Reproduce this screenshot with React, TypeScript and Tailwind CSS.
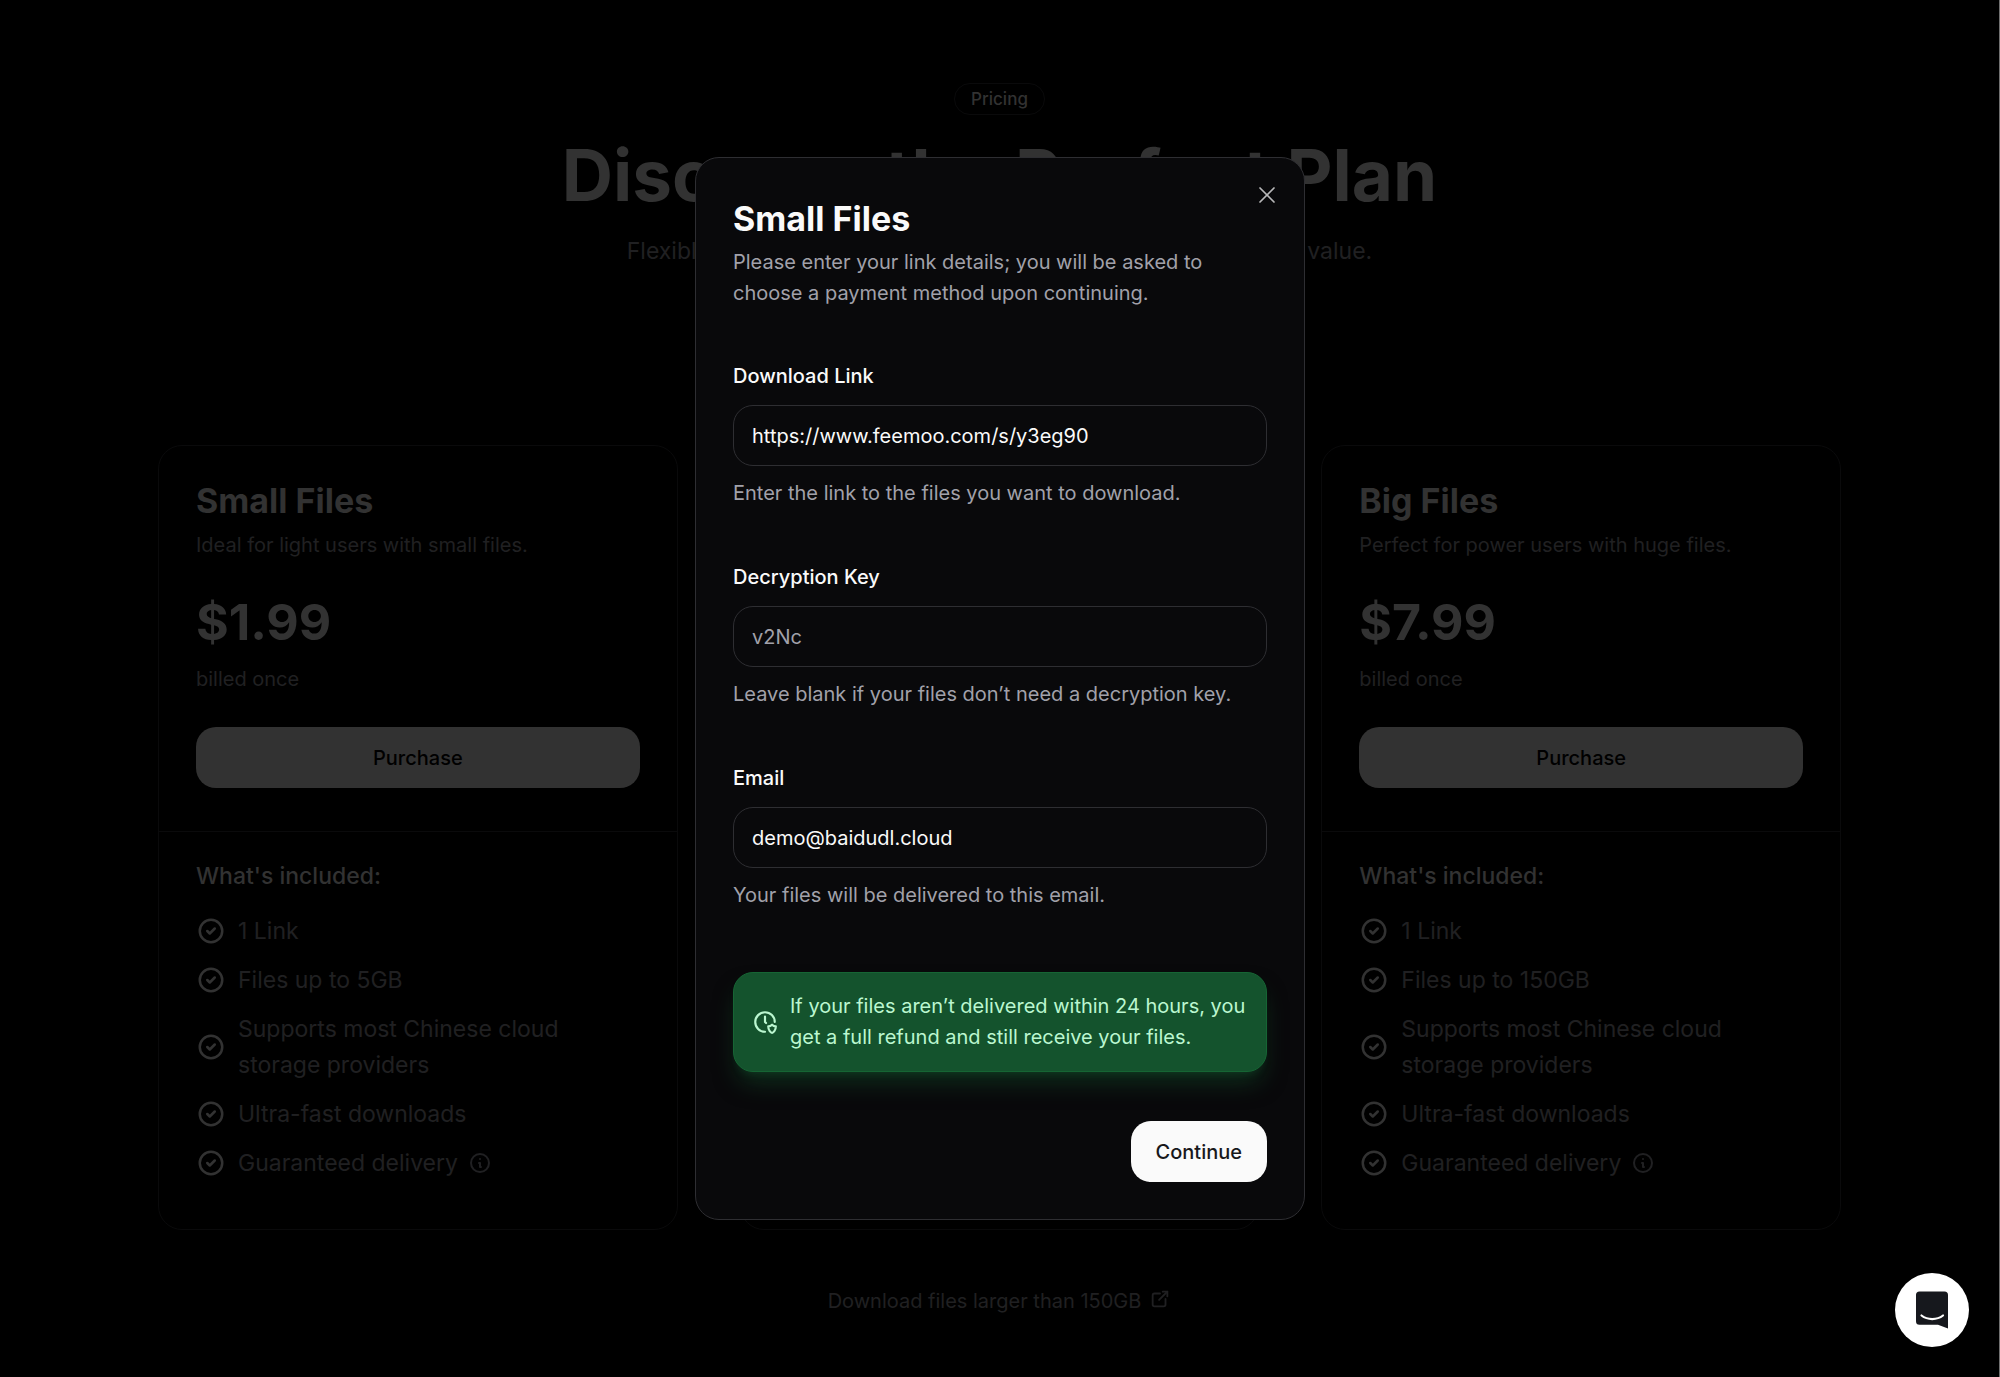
import { useState, type ReactNode } from 'react'
import { X } from 'lucide-react'

interface Plan {
  name: string
  tagline: string
  price: string
  features: string[]
}

const smallPlan: Plan = {
  name: 'Small Files',
  tagline: 'Ideal for light users with small files.',
  price: '$1.99',
  features: ['1 Link', 'Files up to 5GB', 'Supports most Chinese cloud storage providers', 'Ultra-fast downloads'],
}

const bigPlan: Plan = {
  name: 'Big Files',
  tagline: 'Perfect for power users with huge files.',
  price: '$7.99',
  features: ['1 Link', 'Files up to 150GB', 'Supports most Chinese cloud storage providers', 'Ultra-fast downloads'],
}

function Icon({ className, children }: { className: string; children: ReactNode }) {
  return (
    <svg className={className} viewBox="0 0 24 24" fill="none" stroke="currentColor" strokeWidth={2} strokeLinecap="round" strokeLinejoin="round" aria-hidden="true">
      {children}
    </svg>
  )
}

function CheckItem({ children }: { children: ReactNode }) {
  return (
    <li className="flex items-center gap-3">
      <Icon className="w-[30px] h-[30px] shrink-0 text-[#323232]">
        <path d="M3 12a9 9 0 1 0 18 0a9 9 0 1 0 -18 0" />
        <path d="M9 12l2 2l4 -4" />
      </Icon>
      {children}
    </li>
  )
}

function PlanCard({ plan }: { plan: Plan }) {
  return (
    <div className="flex-1 border border-[#0a0a0b] rounded-3xl">
      <div className="px-[37px] pt-[31px] pb-[43px] border-b border-[#0a0a0b]">
        <h2 className="text-[34px] leading-12 font-bold text-[#323232]">{plan.name}</h2>
        <p className="mt-1 text-[20px] leading-8 text-[#202022]">{plan.tagline}</p>
        <p className="mt-[31px] text-[50px] leading-[61px] font-bold text-[#323232]">{plan.price}</p>
        <p className="mt-[10px] text-[20px] leading-8 text-[#202022]">billed once</p>
        <button className="mt-8 w-full h-[61px] rounded-[20px] bg-[#323232] text-[20px] font-medium text-black">
          Purchase
        </button>
      </div>
      <div className="px-[37px] pt-[26px] pb-12">
        <h3 className="text-[23px] leading-9 font-medium text-[#323232]">What's included:</h3>
        <ul className="mt-[19px] flex flex-col gap-[13px] text-[23px] leading-9 text-[#202022]">
          {plan.features.map((feature) => (
            <CheckItem key={feature}>{feature}</CheckItem>
          ))}
          <CheckItem>
            <span className="flex items-center gap-[10px]">
              Guaranteed delivery
              <Icon className="w-6 h-6">
                <path d="M3 12a9 9 0 1 0 18 0a9 9 0 0 0 -18 0" />
                <path d="M12 8h.01" />
                <path d="M11 12h1v4h1" />
              </Icon>
            </span>
          </CheckItem>
        </ul>
      </div>
    </div>
  )
}

interface FieldProps {
  id: string
  label: string
  hint: string
  value: string
  placeholder?: string
  onChange: (value: string) => void
}

function Field({ id, label, hint, value, placeholder, onChange }: FieldProps) {
  return (
    <div className="flex flex-col">
      <label htmlFor={id} className="text-[20px] leading-[30px] font-medium text-[#fafafa]">{label}</label>
      <input
        id={id}
        type="text"
        value={value}
        placeholder={placeholder}
        onChange={(e) => onChange(e.target.value)}
        className="mt-[14px] h-[61px] w-full rounded-[20px] border border-[#2e2e32] bg-transparent px-[18px] text-[20px] text-[#fafafa] placeholder:text-[#a1a1aa] focus:outline-none"
      />
      <p className="mt-3 text-[20px] leading-[31px] text-[#a1a1aa]">{hint}</p>
    </div>
  )
}

function PurchaseDialog() {
  const [link, setLink] = useState('https://www.feemoo.com/s/y3eg90')
  const [decryptionKey, setDecryptionKey] = useState('')
  const [email, setEmail] = useState('demo@baidudl.cloud')

  return (
    <div role="dialog" aria-labelledby="dialog-title" className="relative w-[610px] rounded-3xl border border-[#2e2e32] bg-[#09090b] p-[37px]">
      <button aria-label="Close" className="absolute top-[23px] right-[23px] text-[#b8b8b9]">
        <X className="w-7 h-7" strokeWidth={1.5} />
      </button>
      <h2 id="dialog-title" className="text-[34px] leading-12 font-bold text-[#fafafa]">Small Files</h2>
      <p className="mt-1 text-[20px] leading-[31px] text-[#a1a1aa]">
        Please enter your link details; you will be asked to choose a payment method upon continuing.
      </p>
      <form className="mt-[52px] flex flex-col" onSubmit={(e) => e.preventDefault()}>
        <div className="flex flex-col gap-[53px]">
          <Field id="link" label="Download Link" hint="Enter the link to the files you want to download." value={link} onChange={setLink} />
          <Field id="key" label="Decryption Key" hint="Leave blank if your files don’t need a decryption key." value={decryptionKey} placeholder="v2Nc" onChange={setDecryptionKey} />
          <Field id="email" label="Email" hint="Your files will be delivered to this email." value={email} onChange={setEmail} />
        </div>
        <div className="mt-[61px] flex items-center gap-3 rounded-[20px] border border-[#166534] bg-[#14532d] py-[18px] pl-[18px] pr-3 text-[#bbf7d0] shadow-[0_15px_23px_-5px_#14532d80,0_6px_9px_-6px_#14532d80]">
          <Icon className="w-[26px] h-[26px] shrink-0">
            <path d="M21 12a9 9 0 1 0 -8.980 9" />
            <path d="M12 7v5l1 1" />
            <path d="M22 16c0 4 -2.500 6 -3.500 6s-3.500 -2 -3.500 -6c1 0 2.500 -.5 3.500 -1.500c1 1 2.500 1.500 3.500 1.500z" />
          </Icon>
          <p className="text-[20px] leading-[31px]">
            If your files aren’t delivered within 24 hours, you get a full refund and still receive your files.
          </p>
        </div>
        <button type="submit" className="mt-[49px] h-[61px] self-end rounded-[20px] bg-[#fafafa] px-[25px] text-[20px] font-medium text-[#18181b]">
          Continue
        </button>
      </form>
    </div>
  )
}

export default function App() {
  return (
    <div className="relative min-h-screen border-r border-[#707070] bg-black font-['Inter',sans-serif]">
      <main className="flex flex-col items-center px-[158px] pt-[83px] pb-10">
        <span className="rounded-full border border-[#0a0a0b] px-4 text-[17px] leading-[30px] font-medium text-[#323232]">Pricing</span>
        <h1 className="mt-[22px] text-[71px] leading-[76px] font-bold text-[#323232]">Discover the Perfect Plan</h1>
        <p className="mt-5 text-[23px] leading-9 text-[#202022]">
          Flexible pricing for every need so that you always get the best value.
        </p>
        <div className="mt-[176px] flex w-full items-stretch gap-[62px]">
          <PlanCard plan={smallPlan} />
          <div className="flex-1 border border-[#0a0a0b] rounded-3xl" />
          <PlanCard plan={bigPlan} />
        </div>
        <a href="#large-files" className="mt-[55px] flex items-center gap-2 text-[20px] leading-8 text-[#202022]">
          Download files larger than 150GB
          <Icon className="mb-1 w-[22px] h-[22px]">
            <path d="M12 6h-6a2 2 0 0 0 -2 2v10a2 2 0 0 0 2 2h10a2 2 0 0 0 2 -2v-6" />
            <path d="M11 13l9 -9" />
            <path d="M15 4h5v5" />
          </Icon>
        </a>
      </main>

      <div className="fixed inset-0 flex items-center justify-center">
        <PurchaseDialog />
      </div>

      <button aria-label="Open chat" className="fixed right-[31px] bottom-[30px] flex h-[74px] w-[74px] items-center justify-center rounded-full bg-white">
        <svg className="w-9 h-10" viewBox="0 0 36 40">
          <path d="M5.500 1.500h25a3.500 3.500 0 0 1 3.500 3.500V38.500l-10-3.800H5.500A3.500 3.500 0 0 1 2 31.200V5a3.500 3.500 0 0 1 3.500-3.500z" fill="#16181d" />
          <path d="M7.500 25.500c6 4.700 15.500 4.700 21.500 0" fill="none" stroke="#fff" strokeWidth="2.200" strokeLinecap="round" />
        </svg>
      </button>
    </div>
  )
}
